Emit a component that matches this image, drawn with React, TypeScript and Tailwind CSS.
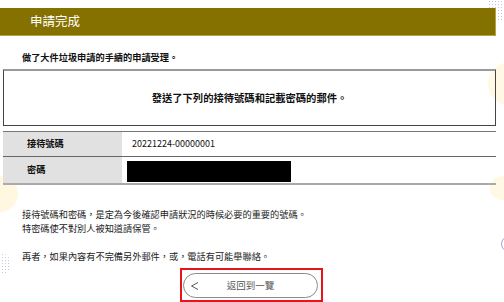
import React from "react";

const font = { fontFamily: '"Noto Sans CJK TC", "Noto Sans CJK JP", "Noto Sans", sans-serif' };

export default function App() {
  return (
    <div className="relative w-[504px] h-[302px] overflow-hidden bg-white text-[#111]" style={font}>
      {/* background decorations */}
      <div className="absolute right-0 top-0 w-[16px] h-[22px] rounded-bl-full bg-[radial-gradient(#c9c2e0_0.8px,transparent_0.9px)] bg-[length:3px_3px]" />
      <div className="absolute left-[488px] top-[62px] w-[44px] h-[44px] rounded-full bg-[#fff8e4]" />
      <div className="absolute left-[-18px] top-[176px] w-[36px] h-[36px] rounded-full bg-[#fff7e0]" />
      <div className="absolute left-[490px] top-[176px] w-[30px] h-[24px] rounded-full bg-[#fff8e4]" />
      <div className="absolute left-[501px] top-[236px] w-[16px] h-[16px] rounded-full border border-[#a79fdc]" />
      <div className="absolute left-[-11px] top-[253px] w-[22px] h-[22px] rounded-full bg-[radial-gradient(#cdc6e2_0.8px,transparent_0.9px)] bg-[length:3px_3px]" />

      <div className="relative">
        <div className="mt-[8px] w-[496px] h-[28px] bg-[#857100] border-b border-r border-[#b3a44a] flex items-center pl-[30px] text-white text-[12.5px] leading-none">
          申請完成
        </div>

        <p className="mt-[15px] pl-[22px] text-[9.2px] leading-[13px] font-bold">做了大件垃圾申請的手續的申請受理。</p>

        <div className="mt-[5px] ml-[3px] w-[493px] h-[57px] border border-[#444] border-t-2 border-t-[#9a9a9a] flex items-center justify-center text-[10.3px] font-bold">
          發送了下列的接待號碼和記載密碼的郵件。
        </div>

        <div className="mt-[5px] ml-[3px] w-[493px] border-t border-[#777] border-b-2 border-b-[#aaa]">
          <div className="flex h-[25px] border-b border-[#666]">
            <div className="w-[119px] bg-[#e1e1e1] flex items-center pl-[24px] text-[9.2px] font-bold">接待號碼</div>
            <div className="flex-1 flex items-center pl-[10px] text-[9px]">20221224-00000001</div>
          </div>
          <div className="flex h-[26px]">
            <div className="w-[119px] bg-[#e1e1e1] flex items-center pl-[24px] text-[9.2px] font-bold">密碼</div>
            <div className="flex-1 flex items-center pl-[5px] pt-[2px]">
              <div className="w-[164px] h-[21px] bg-black" />
            </div>
          </div>
        </div>

        <div className="mt-[22px] pl-[22px] text-[9.2px] leading-[14px] text-[#222]">
          <p>接待號碼和密碼，是定為今後確認申請狀況的時候必要的重要的號碼。</p>
          <p>特密碼使不對別人被知道請保管。</p>
          <p className="mt-[14px]">再者，如果內容有不完備另外郵件，或，電話有可能舉聯絡。</p>
        </div>

        <div className="mt-[5px] ml-[180px] w-[143px] h-[34px] border-2 border-[#e8141c] pt-[3px] pl-[1px]">
          <div className="relative w-[135px] h-[25px] rounded-full border border-[#8a8a8a] flex items-center justify-center text-[9.5px] text-[#555]">
            <svg className="absolute left-[6px] top-[7px]" width="9" height="10" viewBox="0 0 9 10">
              <polyline points="8,1.5 1.5,5 8,8.5" fill="none" stroke="#555" strokeWidth="1" />
            </svg>
            <span>返回到一覽</span>
          </div>
        </div>
      </div>
    </div>
  );
}
